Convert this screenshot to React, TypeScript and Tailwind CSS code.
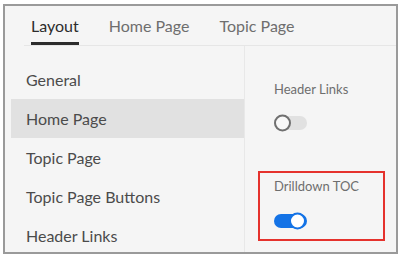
import React from 'react'

function Toggle({ on }: { on: boolean }) {
  return on ? (
    <div className="relative h-[14px] w-[33px] rounded-full bg-[#1473e6]">
      <div className="absolute right-[1px] top-1/2 h-[17px] w-[17px] -translate-y-1/2 rounded-full border-2 border-[#1473e6] bg-white" />
    </div>
  ) : (
    <div className="relative h-[14px] w-[33px] rounded-full bg-[#e1e1e1]">
      <div className="absolute left-0 top-1/2 h-[17px] w-[17px] -translate-y-1/2 rounded-full border-2 border-[#707070] bg-[#f8f8f8]" />
    </div>
  )
}

const sideItems = ['General', 'Home Page', 'Topic Page', 'Topic Page Buttons', 'Header Links']

export default function App() {
  return (
    <div className="h-[259px] w-[401px] bg-white pl-[3px] pt-[4px]" style={{ fontFamily: 'Lato, "Open Sans", sans-serif' }}>
      <div className="flex h-[250px] w-[395px] flex-col overflow-hidden border-2 border-[#9a9a9a] bg-[#f5f5f5]">
        {/* tabs */}
        <div className="ml-[19px] flex h-[40px] shrink-0 items-end gap-[30px] border-b border-[#e6e6e6] pl-[7px]">
          <div className="border-b-[3px] border-[#2c2c2c] pb-[5px] text-[16px] leading-[22px] text-[#2c2c2c]">Layout</div>
          <div className="pb-[8px] text-[16px] leading-[22px] text-[#6e6e6e]">Home Page</div>
          <div className="pb-[8px] text-[16px] leading-[22px] text-[#6e6e6e]">Topic Page</div>
        </div>
        <div className="flex flex-1">
          {/* sidebar */}
          <div className="w-[240px] border-r border-[#e8e8e8] pl-[6px] pt-[14px]">
            {sideItems.map((item) => (
              <div
                key={item}
                className={`flex h-[39px] items-center pl-[15px] text-[16px] text-[#4b4b4b] ${item === 'Home Page' ? 'bg-[#e1e1e1]' : ''}`}
              >
                {item}
              </div>
            ))}
          </div>
          {/* settings */}
          <div className="flex flex-1 flex-col pl-[13px] pt-[34px]">
            <div className="pl-[16px]">
              <div className="text-[13px] leading-[18px] text-[#6e6e6e]">Header Links</div>
              <div className="mt-[18px]">
                <Toggle on={false} />
              </div>
            </div>
            <div className="mt-[41px] h-[70px] w-[127px] border-2 border-[#e5322d] pl-[14px] pt-[4px]">
              <div className="text-[13px] leading-[18px] text-[#6e6e6e]">Drilldown TOC</div>
              <div className="mt-[19px]">
                <Toggle on={true} />
              </div>
            </div>
          </div>
        </div>
      </div>
    </div>
  )
}
